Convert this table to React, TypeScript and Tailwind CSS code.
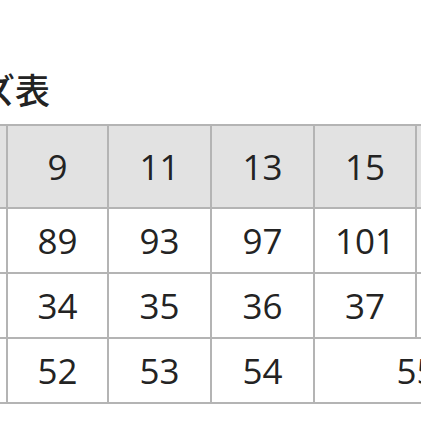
const cols = ["9", "11", "13", "15", "17"];
const widths = ["w-[101px]", "w-[103px]", "w-[103px]", "w-[102px]", "w-[103px]"];

const rows = [
  { label: "胸囲", values: ["89", "93", "97", "101", "105"] },
  { label: "肩幅", values: ["34", "35", "36", "37", "38"] },
];

export default function App() {
  return (
    <div className="w-[421px] h-[421px] overflow-hidden bg-white text-[#232323] font-['Open_Sans','Noto_Sans_CJK_JP',sans-serif]">
      <div className="pt-[71px] ml-[-89px] text-[35px] leading-[36px] font-medium font-['Noto_Sans_CJK_JP',sans-serif] whitespace-nowrap">
        サイズ表
      </div>
      <table className="mt-[17px] ml-[-97px] w-[615px] min-w-[615px] table-fixed border-collapse text-[35px] leading-[40px]">
        <colgroup>
          <col className="w-[103px]" />
          {cols.map((c, i) => (
            <col key={c} className={widths[i]} />
          ))}
        </colgroup>
        <thead>
          <tr className="h-[83px] bg-[#e2e2e2]">
            <th className="border-2 border-[#b4b4b4] font-normal text-[22px] whitespace-nowrap">サイズ</th>
            {cols.map((c) => (
              <th key={c} className="border-2 border-[#b4b4b4] font-normal text-center">
                {c}
              </th>
            ))}
          </tr>
        </thead>
        <tbody>
          {rows.map((r) => (
            <tr key={r.label} className="h-[65px]">
              <td className="border-2 border-[#b4b4b4] text-center text-[22px]">{r.label}</td>
              {r.values.map((v, i) => (
                <td key={i} className="border-2 border-[#b4b4b4] text-center">
                  {v}
                </td>
              ))}
            </tr>
          ))}
          <tr className="h-[65px]">
            <td className="border-2 border-[#b4b4b4] text-center text-[22px]">着丈</td>
            <td className="border-2 border-[#b4b4b4] text-center">52</td>
            <td className="border-2 border-[#b4b4b4] text-center">53</td>
            <td className="border-2 border-[#b4b4b4] text-center">54</td>
            <td colSpan={2} className="border-2 border-[#b4b4b4] text-center">
              55
            </td>
          </tr>
        </tbody>
      </table>
    </div>
  );
}
